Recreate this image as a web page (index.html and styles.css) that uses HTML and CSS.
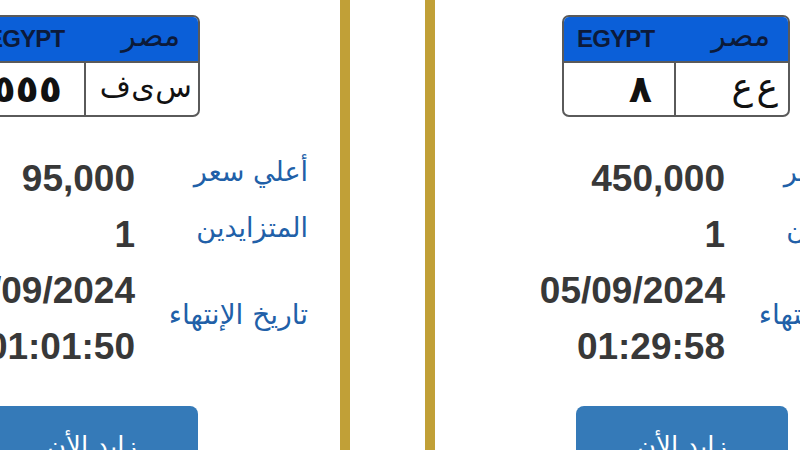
FILE: index.html
```html
<!DOCTYPE html>
<html lang="ar">
<head>
<meta charset="utf-8">
<title>مزاد اللوحات</title>
<link rel="stylesheet" href="styles.css">
</head>
<body>
<div class="strip">
  <div class="card">
    <div class="plate">
      <div class="plate-head">
        <span class="en">EGYPT</span>
        <span class="ar">مصر</span>
      </div>
      <div class="plate-body">
        <div class="cell num">٥٥٥</div>
        <div class="cell let let-3">س ى ف</div>
      </div>
    </div>
    <div class="info">
      <div class="val">95,000</div>
      <div class="lbl">أعلي سعر</div>
      <div class="val">1</div>
      <div class="lbl">المتزايدين</div>
      <div class="val">05/09/2024<br>01:01:50</div>
      <div class="lbl lbl-date">تاريخ الإنتهاء</div>
    </div>
    <button class="bid">زايد الأن</button>
  </div>
  <div class="card">
    <div class="plate">
      <div class="plate-head">
        <span class="en">EGYPT</span>
        <span class="ar">مصر</span>
      </div>
      <div class="plate-body">
        <div class="cell num">٨</div>
        <div class="cell let">ع ع</div>
      </div>
    </div>
    <div class="info">
      <div class="val">450,000</div>
      <div class="lbl">أعلي سعر</div>
      <div class="val">1</div>
      <div class="lbl">المتزايدين</div>
      <div class="val">05/09/2024<br>01:29:58</div>
      <div class="lbl lbl-date">تاريخ الإنتهاء</div>
    </div>
    <button class="bid">زايد الأن</button>
  </div>
</div>
</body>
</html>
```
FILE: styles.css
```css
html, body {
  margin: 0;
  padding: 0;
  background: #ffffff;
  overflow: hidden;
  width: 800px;
  height: 450px;
}
body {
  font-family: "Liberation Sans", "DejaVu Sans", sans-serif;
}
.strip {
  display: flex;
  gap: 75px;
  margin-left: -165px;
  width: 1200px;
}
.card {
  flex: 0 0 515px;
  box-sizing: border-box;
  height: 450px;
  overflow: hidden;
  border-left: 10px solid #c1a037;
  border-right: 10px solid #c1a037;
  padding-top: 15px;
  display: flex;
  flex-direction: column;
}
.card > * {
  flex-shrink: 0;
}
.plate {
  margin-left: 127px;
  width: 228px;
  height: 102px;
  box-sizing: border-box;
  border: 2px solid #5a5a5a;
  border-radius: 7px;
  overflow: hidden;
  display: flex;
  flex-direction: column;
  background: #fff;
}
.plate-head {
  height: 44px;
  flex-shrink: 0;
  background: #0b5fd8;
  border-bottom: 2px solid #5a5a5a;
  display: flex;
  justify-content: space-between;
  align-items: center;
  padding: 0 18px 0 13px;
}
.en {
  font-family: "Liberation Sans", sans-serif;
  font-weight: bold;
  font-size: 24px;
  color: #0c1a3a;
  letter-spacing: -0.8px;
}
.ar {
  font-family: "DejaVu Sans", sans-serif;
  font-size: 30px;
  color: #0c1a3a;
  line-height: 1;
  padding-bottom: 6px;
}
.plate-body {
  flex: 1;
  display: grid;
  grid-template-columns: 1fr 1fr;
  min-height: 0;
}
.cell {
  min-width: 0;
  display: flex;
  align-items: center;
  justify-content: flex-end;
  font-family: "DejaVu Sans", sans-serif;
  color: #111;
  line-height: 1;
  white-space: nowrap;
  overflow: hidden;
}
.num {
  border-right: 2px solid #5a5a5a;
  font-size: 38px;
  font-weight: bold;
  padding-right: 22px;
}
.let {
  font-size: 36px;
  padding-right: 10px;
  word-spacing: -8px;
  padding-bottom: 4px;
}
.let-3 {
  font-size: 30px;
  padding-right: 6px;
  word-spacing: -9px;
}
.info {
  margin-top: 34px;
  display: grid;
  grid-template-columns: 290px 173px;
  align-items: center;
}
.val {
  text-align: right;
  font-family: "Liberation Sans", sans-serif;
  font-weight: bold;
  font-size: 37px;
  line-height: 56px;
  color: #383838;
}
.lbl {
  text-align: right;
  font-family: "DejaVu Sans", sans-serif;
  font-size: 27px;
  color: #2160a8;
  padding-bottom: 16px;
  white-space: nowrap;
}
.lbl-date {
  padding-bottom: 10px;
  font-size: 28px;
}
.bid {
  margin-top: 31px;
  margin-left: 141px;
  width: 212px;
  height: 80px;
  border: none;
  border-radius: 8px;
  background: #357ab8;
  color: #ffffff;
  font-family: "DejaVu Sans", sans-serif;
  font-size: 26px;
  line-height: 80px;
  padding: 0;
  text-align: center;
}
```
